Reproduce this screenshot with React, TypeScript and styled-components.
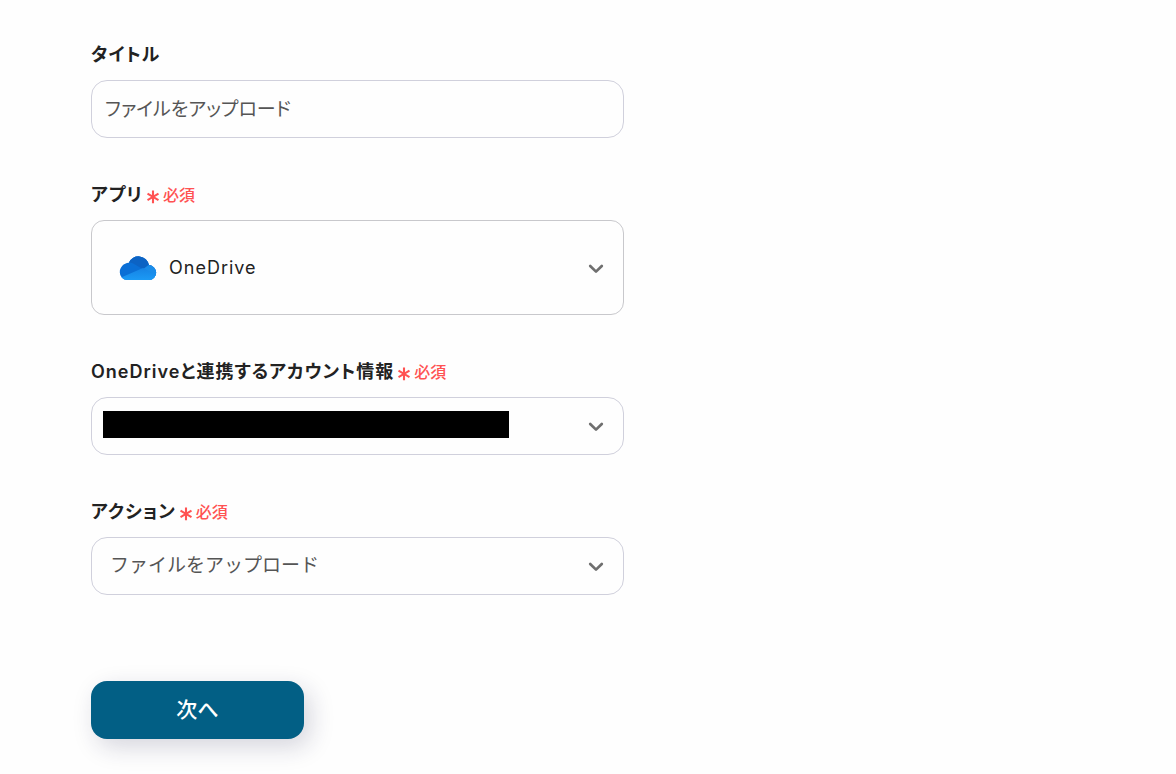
import React, { useState } from "react";
import styled, { createGlobalStyle } from "styled-components";

const GlobalStyle = createGlobalStyle`
  * { box-sizing: border-box; }
  body {
    margin: 0;
    background: #fefefe;
    color: #222;
    font-family: Inter, "Noto Sans CJK JP", sans-serif;
    font-feature-settings: "palt";
  }
`;

const Page = styled.main`
  padding: 40px 91px 32px;
`;

const Form = styled.form`
  display: flex;
  flex-direction: column;
  gap: 42px;
  width: 100%;
  max-width: 533px;
`;

const Field = styled.div`
  display: flex;
  flex-direction: column;
  gap: 12px;
`;

const Label = styled.label`
  display: flex;
  align-items: center;
  gap: 4px;
  height: 28px;
  padding-top: 2px;
  font-size: 18px;
  line-height: 26px;
  font-weight: 600;
  letter-spacing: 1px;
`;

const Required = styled.span`
  display: flex;
  align-items: center;
  gap: 4px;
  color: #ff5252;
  font-size: 16px;
  line-height: 24px;
  font-weight: 500;
  letter-spacing: 0;
`;

const Asterisk = styled.svg`
  width: 12px;
  height: 14px;
  margin-top: 4px;
`;

const TextInput = styled.input`
  width: 100%;
  height: 58px;
  padding: 0 13px 4px;
  border: 1px solid #d0d0dc;
  border-radius: 16px;
  background: transparent;
  color: #555;
  font: inherit;
  font-size: 19px;
  font-feature-settings: inherit;
`;

const SelectBox = styled.div<{ $tall?: boolean }>`
  position: relative;
  display: flex;
  align-items: center;
  height: ${(p) => (p.$tall ? 95 : 58)}px;
`;

const Select = styled.select<{ $tall?: boolean }>`
  appearance: none;
  width: 100%;
  height: 100%;
  padding: ${(p) => (p.$tall ? "0 48px 0 77px" : "0 48px 2px 18px")};
  border: 1px solid ${(p) => (p.$tall ? "#c8c8cc" : "#d0d0dc")};
  border-radius: ${(p) => (p.$tall ? 13 : 16)}px;
  background: transparent;
  color: ${(p) => (p.$tall ? "#222" : "#555")};
  font: inherit;
  font-size: ${(p) => (p.$tall ? 18 : 19)}px;
  font-feature-settings: normal;
  letter-spacing: ${(p) => (p.$tall ? 1 : 0)}px;
`;

const Chevron = styled.svg`
  position: absolute;
  right: 20px;
  width: 16px;
  height: 10px;
  margin-top: 2px;
  pointer-events: none;
`;

const AppLogo = styled.svg`
  position: absolute;
  left: 28px;
  width: 38px;
  height: 24px;
  pointer-events: none;
`;

const Redaction = styled.span`
  position: absolute;
  left: 12px;
  top: 14px;
  width: 406px;
  height: 27px;
  background: #000;
  pointer-events: none;
`;

const NextButton = styled.button`
  width: 213px;
  height: 58px;
  margin-top: 44px;
  padding: 0 0 4px;
  border: 0;
  border-radius: 16px;
  background: #025f85;
  color: #fff;
  font: inherit;
  font-size: 21px;
  font-weight: 500;
  font-feature-settings: inherit;
  box-shadow: 6px 8px 24px rgba(30, 30, 70, 0.18);
`;

function RequiredMark() {
  return (
    <Required>
      <Asterisk viewBox="0 0 12 14" fill="none" stroke="currentColor" strokeWidth="2.1" aria-hidden="true">
        <path d="M6 .6v12.6M.5 3.7l11 6.4M11.5 3.7L.5 10.1" />
      </Asterisk>
      必須
    </Required>
  );
}

function ChevronIcon() {
  return (
    <Chevron viewBox="0 0 16 10" fill="none" stroke="#6f6f6f" strokeWidth="2.7" strokeLinecap="round" strokeLinejoin="round" aria-hidden="true">
      <path d="M2.2 2L8 7.6L13.8 2" />
    </Chevron>
  );
}

function OneDriveLogo() {
  return (
    <AppLogo viewBox="0 0 38 24" aria-hidden="true">
      <defs>
        <linearGradient id="od-front" x1="0" y1="0" x2="0" y2="1">
          <stop offset="0" stopColor="#1683e4" />
          <stop offset="1" stopColor="#1b9af5" />
        </linearGradient>
        <clipPath id="od-shape">
          <path d="M8.3 24A7.6 7.6 0 0 1 .8 16.2C.8 11.3 4.6 7.2 9.8 6.8A10.6 10.6 0 0 1 30 9.1A7.6 7.6 0 0 1 37.2 16.6A7.3 7.3 0 0 1 30 24Z" />
        </clipPath>
      </defs>
      <g clipPath="url(#od-shape)">
        <path d="M0 0H38V24H0Z" fill="#0a6fd6" />
        <path d="M9.8 6.2Q13.5 6.6 16 8.6L24.5 13.6L33 10V0H8Z" fill="#0c63c4" />
        <path d="M23 14L29.5 9L38 8V24H20Z" fill="#1a8ce9" />
        <path d="M2 21.5L24 12.1L38 19V24H2Z" fill="url(#od-front)" />
      </g>
    </AppLogo>
  );
}

export default function App() {
  const [title, setTitle] = useState("ファイルをアップロード");
  return (
    <>
      <GlobalStyle />
      <Page>
        <Form onSubmit={(e: React.FormEvent) => e.preventDefault()}>
          <Field>
            <Label htmlFor="title">タイトル</Label>
            <TextInput id="title" value={title} onChange={(e) => setTitle(e.target.value)} />
          </Field>
          <Field>
            <Label htmlFor="app">アプリ<RequiredMark /></Label>
            <SelectBox $tall>
              <Select $tall id="app"><option>OneDrive</option></Select>
              <OneDriveLogo />
              <ChevronIcon />
            </SelectBox>
          </Field>
          <Field>
            <Label htmlFor="account">OneDriveと連携するアカウント情報<RequiredMark /></Label>
            <SelectBox>
              <Select id="account"><option value="" /></Select>
              <Redaction />
              <ChevronIcon />
            </SelectBox>
          </Field>
          <Field>
            <Label htmlFor="action">アクション<RequiredMark /></Label>
            <SelectBox>
              <Select id="action"><option>ファイルをアップロード</option></Select>
              <ChevronIcon />
            </SelectBox>
          </Field>
          <NextButton type="submit">次へ</NextButton>
        </Form>
      </Page>
    </>
  );
}
